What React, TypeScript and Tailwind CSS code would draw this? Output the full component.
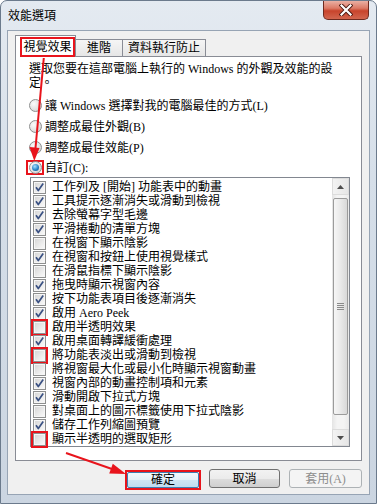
import React from 'react';

const items: [string, boolean, boolean][] = [
  ['工作列及 [開始] 功能表中的動畫', true, false],
  ['工具提示逐漸消失或滑動到檢視', true, false],
  ['去除螢幕字型毛邊', true, false],
  ['平滑捲動的清單方塊', true, false],
  ['在視窗下顯示陰影', false, false],
  ['在視窗和按鈕上使用視覺樣式', true, false],
  ['在滑鼠指標下顯示陰影', false, false],
  ['拖曳時顯示視窗內容', true, false],
  ['按下功能表項目後逐漸消失', true, false],
  ['啟用 Aero Peek', true, false],
  ['啟用半透明效果', false, true],
  ['啟用桌面轉譯緩衝處理', true, false],
  ['將功能表淡出或滑動到檢視', false, true],
  ['將視窗最大化或最小化時顯示視窗動畫', false, false],
  ['視窗內部的動畫控制項和元素', true, false],
  ['滑動開啟下拉式方塊', true, false],
  ['對桌面上的圖示標籤使用下拉式陰影', false, false],
  ['儲存工作列縮圖預覽', true, false],
  ['顯示半透明的選取矩形', false, true],
];

const radios = [
  { label: '讓 Windows 選擇對我的電腦最佳的方式(L)', on: false },
  { label: '調整成最佳外觀(B)', on: false },
  { label: '調整成最佳效能(P)', on: false },
];

function CheckBox({ checked, marked }: { checked: boolean; marked: boolean }) {
  return (
    <span
      className={`flex h-[13px] w-[13px] shrink-0 items-center justify-center border border-[#8e8f8f] bg-[linear-gradient(135deg,#d4d4d4_0%,#ececec_60%,#fbfbfb_100%)] shadow-[inset_0_0_0_1px_#f6f6f6] ${
        marked ? 'outline-2 outline-[#e8141c]' : ''
      }`}
    >
      {checked && (
        <svg width="11" height="11" viewBox="0 0 11 11">
          <path d="M2 5.2 L4.3 8.6 L9.2 1.6" fill="none" stroke="#3a5183" strokeWidth="1.7" strokeLinejoin="round" />
        </svg>
      )}
    </span>
  );
}

function Radio({ on }: { on: boolean }) {
  return (
    <span className="flex h-[13px] w-[13px] shrink-0 items-center justify-center rounded-full border border-[#8e8f8f] bg-[radial-gradient(circle_at_35%_35%,#fbfbfb_0%,#e2e2e2_55%,#c8c8c8_100%)]">
      {on && (
        <span className="h-[7px] w-[7px] rounded-full bg-[radial-gradient(circle_at_40%_35%,#a8e2ff_0%,#2a86c8_55%,#0c4a80_100%)]" />
      )}
    </span>
  );
}

function CloseButton() {
  return (
    <div className="ml-auto mr-[7px] flex h-[19px] w-[46px] items-center justify-center rounded-b-[5px] border border-t-0 border-[#6e2a1f] bg-[linear-gradient(180deg,#eab0a3_0%,#dc7a66_40%,#c8442c_55%,#d2664f_100%)]">
      <svg width="14" height="12" viewBox="0 0 14 12">
        <path d="M2.5 1.5 L11.5 10.5 M11.5 1.5 L2.5 10.5" stroke="#4a1810" strokeWidth="4" strokeLinecap="square" />
        <path d="M2.5 1.5 L11.5 10.5 M11.5 1.5 L2.5 10.5" stroke="#ffffff" strokeWidth="2.2" strokeLinecap="square" />
      </svg>
    </div>
  );
}

function Arrow({ up }: { up: boolean }) {
  return (
    <div className="flex h-[17px] items-center justify-center border border-[#dcdcdc] bg-[linear-gradient(90deg,#f3f3f3,#e6e6e6)]">
      <svg width="7" height="4" viewBox="0 0 7 4">
        <path d={up ? 'M0 4 L3.5 0 L7 4 Z' : 'M0 0 L3.5 4 L7 0 Z'} fill="#4d4d4d" />
      </svg>
    </div>
  );
}

function Scrollbar() {
  return (
    <div className="flex w-[17px] flex-col bg-[linear-gradient(90deg,#e4e4e4_0%,#f4f4f4_30%,#f4f4f4_70%,#e9e9e9_100%)]">
      <Arrow up />
      <div className="mx-px mt-[3px] flex h-[217px] flex-col items-center justify-center gap-px rounded-[2px] border border-[#9b9b9b] bg-[linear-gradient(90deg,#f6f6f6_0%,#e9e9e9_50%,#d8d8d8_100%)]">
        <span className="h-px w-[7px] bg-[#8a8a8a]" />
        <span className="h-px w-[7px] bg-[#8a8a8a]" />
        <span className="h-px w-[7px] bg-[#8a8a8a]" />
        <span className="h-px w-[7px] bg-[#8a8a8a]" />
      </div>
      <div className="flex-1" />
      <Arrow up={false} />
    </div>
  );
}

function Annotations() {
  return (
    <svg className="pointer-events-none absolute left-0 top-0" width="377" height="504" viewBox="0 0 377 504">
      <line x1="42.8" y1="57" x2="34.4" y2="148" stroke="#e8141c" strokeWidth="2" />
      <polygon points="33.3,160 28.5,146 38.5,147" fill="#e8141c" />
      <line x1="65" y1="452" x2="111" y2="468" stroke="#e8141c" strokeWidth="2" />
      <polygon points="125,473 108.2,472.6 111.8,462.8" fill="#e8141c" />
    </svg>
  );
}

export default function App() {
  return (
    <div className="relative h-[504px] w-[377px] overflow-hidden rounded-t-[7px] border border-[#6b7a8c] bg-[linear-gradient(180deg,#e4eaf1_0%,#d6dfe9_35%,#cbd5e1_100%)] font-['Liberation_Serif','Noto_Sans_CJK_TC',serif] text-[12px] text-black">
      {/* Title bar */}
      <div className="flex h-[29px]">
        <div className="pl-[7px] pt-[8px] leading-[14px]">效能選項</div>
        <CloseButton />
      </div>

      {/* Client area */}
      <div className="ml-[6px] flex h-[465px] w-[363px] flex-col border border-[#97a4b4] bg-[#f0f0f0] pl-[7px] pt-[4px]">
        {/* Tabs */}
        <div className="relative z-10 flex h-[22px] items-end">
          <div className="flex h-[22px] w-[61px] border border-b-0 border-[#898c95] bg-white pl-[4px] pt-[1px]">
            <div className="flex h-[20px] w-[55px] items-center justify-center border-2 border-[#e8141c] leading-[14px]">
              視覺效果
            </div>
          </div>
          <div className="mb-px flex h-[17px] w-[47px] items-center justify-center border border-b-0 border-l-0 border-[#898c95] bg-[linear-gradient(180deg,#f5f5f5_0%,#e6e6e6_100%)] leading-[14px]">
            進階
          </div>
          <div className="mb-px flex h-[17px] w-[83px] items-center justify-center border border-b-0 border-l-0 border-[#898c95] bg-[linear-gradient(180deg,#f5f5f5_0%,#e6e6e6_100%)] leading-[14px]">
            資料執行防止
          </div>
        </div>

        {/* Tab panel */}
        <div className="-mt-px flex h-[405px] w-[347px] flex-col border border-[#898c95] bg-white pt-[5px]">
          <p className="pl-[13px] leading-[14px]">
            選取您要在這部電腦上執行的 Windows 的外觀及效能的設
            <br />
            定。
          </p>

          <div className="mt-[5px] flex flex-col pl-[13px]">
            {radios.map((r) => (
              <div key={r.label} className="flex h-[21px] items-center">
                <Radio on={r.on} />
                <span className="ml-[3px] whitespace-nowrap leading-[14px]">{r.label}</span>
              </div>
            ))}
            <div className="flex h-[19px] items-center">
              <span className="-ml-[3px] flex h-[15px] w-[18px] items-center justify-center border-2 border-[#e8141c]">
                <Radio on />
              </span>
              <span className="ml-px whitespace-nowrap leading-[14px]">自訂(C):</span>
            </div>
          </div>

          {/* Settings list */}
          <div className="ml-[14px] flex h-[270px] w-[320px] border border-[#828790] bg-white">
            <div className="flex flex-1 flex-col pl-[2px] pt-[2px]">
              {items.map(([label, checked, marked]) => (
                <div key={label} className="flex h-[14px] items-center">
                  <CheckBox checked={checked} marked={marked} />
                  <span className="ml-[6px] whitespace-nowrap leading-[14px]">{label}</span>
                </div>
              ))}
            </div>
            <Scrollbar />
          </div>
        </div>

        {/* Buttons */}
        <div className="mt-[8px] flex items-start justify-end pr-[7px]">
          <div className="mt-px h-[20px] w-[76px] border-2 border-[#e8141c]">
            <div className="flex h-full w-full items-center justify-center rounded-[2px] border border-[#3c7fb1] bg-[linear-gradient(180deg,#f2f9fd_0%,#e3f0f9_50%,#cfe5f4_51%,#bfdcf0_100%)] leading-[14px]">
              確定
            </div>
          </div>
          <div className="ml-[8px] flex h-[19px] w-[71px] items-center justify-center rounded-[3px] border border-[#707070] bg-[linear-gradient(180deg,#f2f2f2_0%,#ebebeb_50%,#dddddd_51%,#cfcfcf_100%)] leading-[14px]">
            取消
          </div>
          <div className="ml-[9px] flex h-[19px] w-[73px] items-center justify-center rounded-[3px] border border-[#adb2b5] bg-[#f4f4f4] leading-[14px] text-[#8d8d8d]">
            套用(A)
          </div>
        </div>
      </div>

      <Annotations />
    </div>
  );
}
